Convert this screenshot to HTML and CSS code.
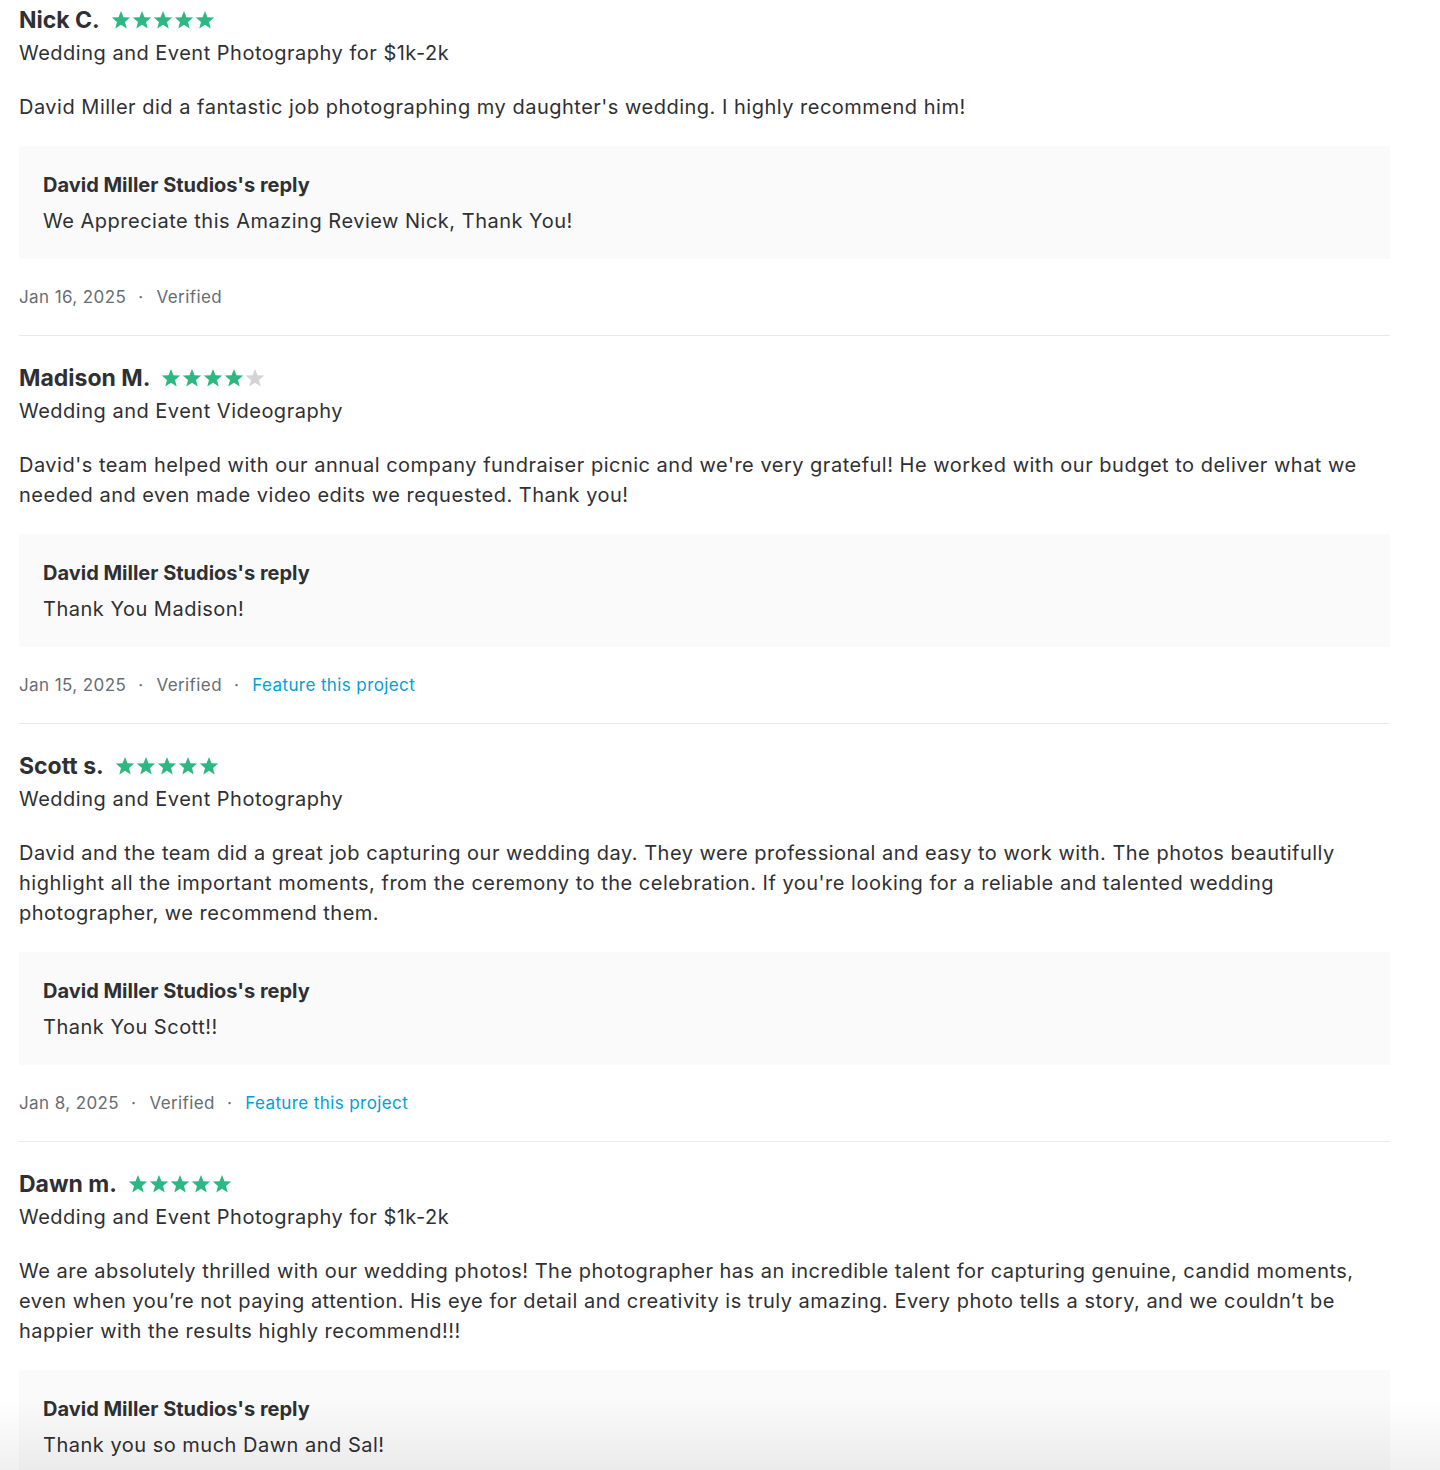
FILE: index.html
```html
<!DOCTYPE html>
<html>
<head>
<meta charset="utf-8">
<link rel="stylesheet" href="styles.css">
</head>
<body>
<svg width="0" height="0" style="position:absolute">
  <defs>
    <symbol id="star" viewBox="0 0 20 20">
      <polygon points="10,1 12.5,7.2 19.2,7.6 14,11.9 15.7,18.5 10,14.8 4.3,18.5 6,11.9 0.8,7.6 7.5,7.2"/>
    </symbol>
  </defs>
</svg>
<div class="list">
  <div class="review first">
    <div class="head"><span class="name">Nick C.</span>
      <span class="stars"><svg class="star on"><use href="#star"/></svg><svg class="star on"><use href="#star"/></svg><svg class="star on"><use href="#star"/></svg><svg class="star on"><use href="#star"/></svg><svg class="star on"><use href="#star"/></svg></span></div>
    <div class="service">Wedding and Event Photography for $1k-2k</div>
    <p class="text">David Miller did a fantastic job photographing my daughter's wedding. I highly recommend him!</p>
    <div class="reply">
      <div class="reply-title">David Miller Studios's reply</div>
      <div class="reply-text">We Appreciate this Amazing Review Nick, Thank You!</div>
    </div>
    <div class="meta"><span>Jan 16, 2025</span><span class="dot">·</span><span>Verified</span></div>
  </div>

  <div class="review">
    <div class="head"><span class="name">Madison M.</span>
      <span class="stars"><svg class="star on"><use href="#star"/></svg><svg class="star on"><use href="#star"/></svg><svg class="star on"><use href="#star"/></svg><svg class="star on"><use href="#star"/></svg><svg class="star off"><use href="#star"/></svg></span></div>
    <div class="service">Wedding and Event Videography</div>
    <p class="text">David's team helped with our annual company fundraiser picnic and we're very grateful! He worked with our budget to deliver what we needed and even made video edits we requested. Thank you!</p>
    <div class="reply">
      <div class="reply-title">David Miller Studios's reply</div>
      <div class="reply-text">Thank You Madison!</div>
    </div>
    <div class="meta"><span>Jan 15, 2025</span><span class="dot">·</span><span>Verified</span><span class="dot">·</span><a class="link" href="#">Feature this project</a></div>
  </div>

  <div class="review">
    <div class="head"><span class="name">Scott s.</span>
      <span class="stars"><svg class="star on"><use href="#star"/></svg><svg class="star on"><use href="#star"/></svg><svg class="star on"><use href="#star"/></svg><svg class="star on"><use href="#star"/></svg><svg class="star on"><use href="#star"/></svg></span></div>
    <div class="service">Wedding and Event Photography</div>
    <p class="text">David and the team did a great job capturing our wedding day. They were professional and easy to work with. The photos beautifully highlight all the important moments, from the ceremony to the celebration. If you're looking for a reliable and talented wedding photographer, we recommend them.</p>
    <div class="reply">
      <div class="reply-title">David Miller Studios's reply</div>
      <div class="reply-text">Thank You Scott!!</div>
    </div>
    <div class="meta"><span>Jan 8, 2025</span><span class="dot">·</span><span>Verified</span><span class="dot">·</span><a class="link" href="#">Feature this project</a></div>
  </div>

  <div class="review last">
    <div class="head"><span class="name">Dawn m.</span>
      <span class="stars"><svg class="star on"><use href="#star"/></svg><svg class="star on"><use href="#star"/></svg><svg class="star on"><use href="#star"/></svg><svg class="star on"><use href="#star"/></svg><svg class="star on"><use href="#star"/></svg></span></div>
    <div class="service">Wedding and Event Photography for $1k-2k</div>
    <p class="text">We are absolutely thrilled with our wedding photos! The photographer has an incredible talent for capturing genuine, candid moments, even when you’re not paying attention. His eye for detail and creativity is truly amazing. Every photo tells a story, and we couldn’t be happier with the results highly recommend!!!</p>
    <div class="reply">
      <div class="reply-title">David Miller Studios's reply</div>
      <div class="reply-text">Thank you so much Dawn and Sal!</div>
    </div>
  </div>
</div>
<div class="fade"></div>
</body>
</html>
```

FILE: styles.css
```css
html, body {
  margin: 0;
  padding: 0;
  background: #fff;
}
body {
  font-family: Inter, "Open Sans", sans-serif;
  color: #2f3033;
  overflow: hidden;
  height: 1470px;
}
.list {
  width: 1371px;
  margin-left: 19px;
}
.review {
  padding: 27px 0 26px;
  border-bottom: 1px solid #e9e9e9;
}
.review.first {
  padding-top: 5px;
}
.review.last {
  border-bottom: none;
  padding-bottom: 0;
}
.head {
  display: flex;
  align-items: center;
  height: 30px;
}
.name {
  font-size: 23px;
  font-weight: 700;
  line-height: 30px;
  margin-right: 11px;
}
.stars {
  display: flex;
  gap: 1px;
}
.star {
  width: 20px;
  height: 20px;
}
.star.on { fill: #2db783; }
.star.off { fill: #d3d4d5; }
.service {
  font-size: 20px;
  letter-spacing: 0.5px;
  line-height: 28px;
  margin-top: 4px;
}
.text {
  font-size: 20px;
  letter-spacing: 0.5px;
  line-height: 30px;
  margin: 25px 0 0;
}
.reply {
  background: #fafafa;
  margin-top: 24px;
  padding: 25px 24px 24px;
}
.reply-title {
  font-size: 20px;
  font-weight: 700;
  line-height: 28px;
}
.reply-text {
  font-size: 20px;
  letter-spacing: 0.5px;
  line-height: 28px;
  margin-top: 8px;
}
.meta {
  display: flex;
  font-size: 17px;
  letter-spacing: 0.4px;
  line-height: 24px;
  color: #676d73;
  margin-top: 26px;
}
.dot {
  margin: 0 13px 0 12px;
}
.link {
  color: #009fd9;
  text-decoration: none;
}
.fade {
  position: fixed;
  left: 0;
  right: 0;
  bottom: 0;
  height: 70px;
  background: linear-gradient(to bottom, rgba(0,0,0,0), rgba(0,0,0,0.06));
  pointer-events: none;
}
```
